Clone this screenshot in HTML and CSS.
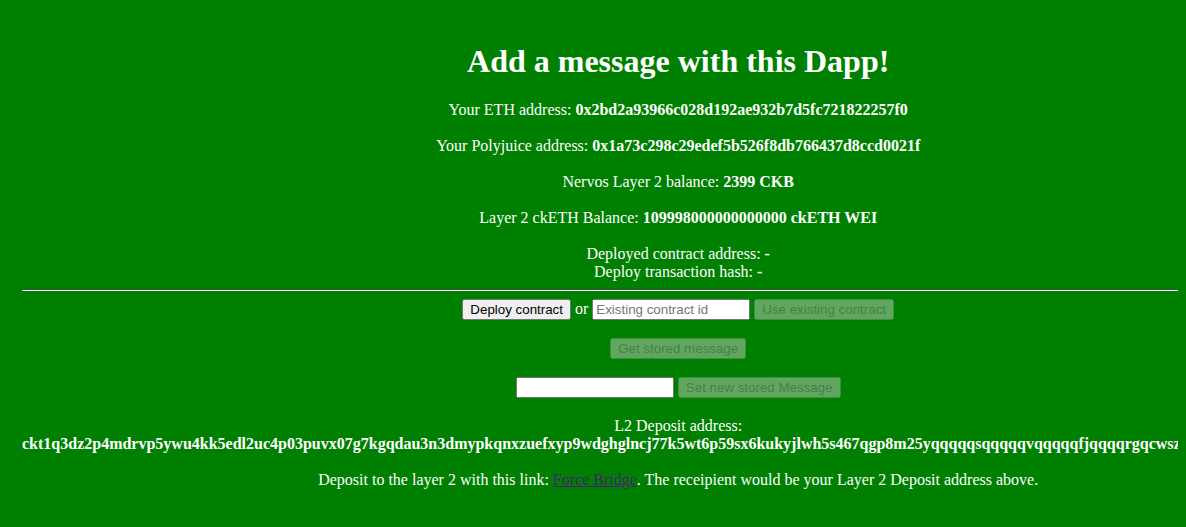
FILE: index.html
```html
<!DOCTYPE html>
<html>
<head>
<meta charset="utf-8">
<title>Dapp</title>
<link rel="stylesheet" href="styles.css">
</head>
<body>
<div class="app">
  <h1 class="title">Add a message with this Dapp!</h1>
  <div class="info">
    <div class="line">Your ETH address: <b>0x2bd2a93966c028d192ae932b7d5fc721822257f0</b></div>
    <div class="line">Your Polyjuice address: <b>0x1a73c298c29edef5b526f8db766437d8ccd0021f</b></div>
    <div class="line">Nervos Layer 2 balance: <b>2399 CKB</b></div>
    <div class="line">Layer 2 ckETH Balance: <b>109998000000000000 ckETH WEI</b></div>
    <div class="line tight">Deployed contract address: <b>-</b></div>
    <div class="line">Deploy transaction hash: <b>-</b></div>
  </div>
  <hr class="rule">
  <div class="controls">
    <div class="row">
      <button class="btn">Deploy contract</button> or <input class="field wide" placeholder="Existing contract id"> <button class="btn" disabled>Use existing contract</button>
    </div>
    <div class="row">
      <button class="btn" disabled>Get stored message</button>
    </div>
    <div class="row">
      <input class="field"> <button class="btn" disabled>Set new stored Message</button>
    </div>
  </div>
  <div class="deposit">
    <div>L2 Deposit address:</div>
    <b class="address">ckt1q3dz2p4mdrvp5ywu4kk5edl2uc4p03puvx07g7kgqdau3n3dmypkqnxzuefxyp9wdghglncj77k5wt6p59sx6kukyjlwh5s467qgp8m25yqqqqqsqqqqqvqqqqqfjqqqqrgqcwszc7l3y4xm2ts9eqkj8r5x</b>
  </div>
  <div class="note">Deposit to the layer 2 with this link: <a class="link" href="#">Force Bridge</a>. The receipient would be your Layer 2 Deposit address above.</div>
</div>
</body>
</html>
```
FILE: styles.css
```css
html {
  background: #008000;
  overflow: hidden;
}
body {
  margin: 8px;
  color: #ffffff;
  font-family: "Liberation Serif", "Times New Roman", serif;
  font-size: 16px;
  overflow: visible !important;
}
.app {
  width: max-content;
  padding: 14px 0 0 14px;
  text-align: center;
}
.title {
  font-size: 32px;
  font-weight: bold;
  margin: 21px 0 21px;
  line-height: 37px;
}
.info {
  display: flex;
  flex-direction: column;
}
.line {
  line-height: 18px;
  margin-bottom: 18px;
}
.line.tight {
  margin-bottom: 0;
}
.line:last-child {
  margin-bottom: 0;
}
.rule {
  margin: 8px 0 7px;
  border: 1px inset #c0c0c0;
  border-color: #9a9a9a #ffffff #ffffff #9a9a9a;
  height: 0;
}
.controls {
  display: flex;
  flex-direction: column;
  gap: 17px;
}
.row {
  line-height: 21px;
}
.btn {
  font-family: "Liberation Sans", Arial, sans-serif;
  font-size: 13.333px;
}
.field {
  font-family: "Liberation Sans", Arial, sans-serif;
  font-size: 13.333px;
  width: 150px;
}
.deposit {
  margin-top: 19px;
  line-height: 18px;
}
.address {
  display: block;
}
.note {
  margin-top: 18px;
  line-height: 18px;
}
.link {
  color: #4b1a7a;
}
```
